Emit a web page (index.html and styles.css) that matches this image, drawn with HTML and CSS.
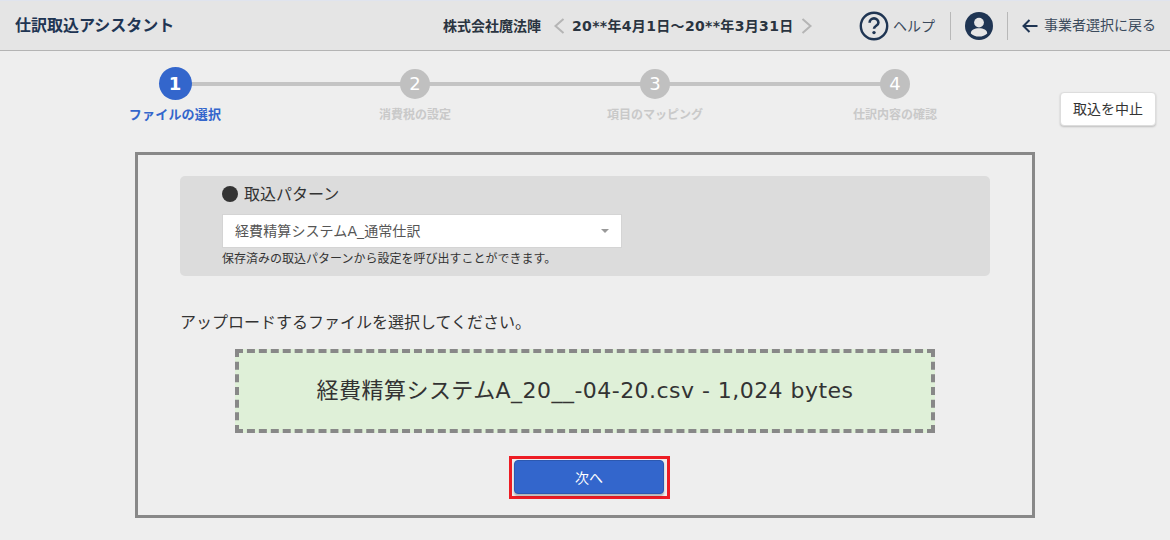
FILE: index.html
```html
<!DOCTYPE html>
<html lang="ja">
<head>
<meta charset="utf-8">
<title>仕訳取込アシスタント</title>
<link rel="stylesheet" href="styles.css">
</head>
<body>
<header class="header">
  <div class="title">仕訳取込アシスタント</div>
  <div class="period">
    <span class="company">株式会社魔法陣</span>
    <svg class="chev" width="12" height="18" viewBox="0 0 12 18"><path d="M10.500 2 2.500 9l8 7" fill="none" stroke="#b5b5b5" stroke-width="2"/></svg>
    <span class="dates">20**年4月1日～20**年3月31日</span>
    <svg class="chev" width="12" height="18" viewBox="0 0 12 18"><path d="M1.500 2l8 7-8 7" fill="none" stroke="#b5b5b5" stroke-width="2"/></svg>
  </div>
  <div class="tools">
    <div class="help">
      <svg width="30" height="30" viewBox="0 0 30 30"><circle cx="15" cy="15" r="13.2" fill="none" stroke="#1f3553" stroke-width="2.4"/><path d="M10.6 11.8a4.4 4.4 0 0 1 8.8 0c0 3-4.4 3-4.4 6" fill="none" stroke="#1f3553" stroke-width="2.6"/><circle cx="15" cy="21.6" r="1.7" fill="#1f3553"/></svg>
      <span>ヘルプ</span>
    </div>
    <div class="divider"></div>
    <svg class="avatar" width="28" height="28" viewBox="0 0 28 28"><circle cx="14" cy="14" r="14" fill="#1f3553"/><circle cx="14" cy="10.6" r="4.9" fill="#e6e6e6"/><path d="M5.8 21.4c0-3.6 3.8-5.2 8.2-5.2s8.2 1.6 8.2 5.2c-1.9 2-4.9 3.2-8.2 3.2s-6.3-1.2-8.2-3.2z" fill="#e6e6e6"/></svg>
    <div class="divider"></div>
    <div class="back">
      <svg width="16" height="14" viewBox="0 0 16 14"><path d="M7.5 1 1.500 7l6 6M2 7h13.500" fill="none" stroke="#1f3553" stroke-width="2"/></svg>
      <span>事業者選択に戻る</span>
    </div>
  </div>
</header>

<div class="steprow">
  <ol class="steps">
    <li class="step active"><span class="dot">1</span><span class="label">ファイルの選択</span></li>
    <li class="step"><span class="dot">2</span><span class="label">消費税の設定</span></li>
    <li class="step"><span class="dot">3</span><span class="label">項目のマッピング</span></li>
    <li class="step"><span class="dot">4</span><span class="label">仕訳内容の確認</span></li>
  </ol>
  <button class="cancel">取込を中止</button>
</div>

<main class="card">
  <section class="pattern">
    <div class="pattern-head"><span class="bullet"></span><span class="head-text">取込パターン</span></div>
    <div class="select"><span class="select-text">経費精算システムA_通常仕訳</span><span class="caret"></span></div>
    <div class="hint">保存済みの取込パターンから設定を呼び出すことができます。</div>
  </section>
  <p class="lead">アップロードするファイルを選択してください。</p>
  <div class="drop">経費精算システムA_20__-04-20.csv - 1,024 bytes</div>
  <div class="actions"><div class="highlight"><button class="next">次へ</button></div></div>
</main>
</body>
</html>
```

FILE: styles.css
```css
* { box-sizing: border-box; }
html, body { margin: 0; height: 100%; }
body {
  width: 1170px;
  height: 540px;
  overflow: hidden;
  background: #eeeeee;
  color: #333;
  font-family: "DejaVu Sans", "Noto Sans CJK JP", sans-serif;
}
.header {
  height: 51px;
  display: flex;
  align-items: center;
  background: #e5e5e5;
  border-top: 1px solid #e0e4ee;
  border-bottom: 1px solid #b4b4b4;
  padding: 0 14px 0 15px;
  color: #1f3553;
}
.title { font-size: 16px; font-weight: 700; width: 428px; padding-bottom: 3px; }
.period {
  display: flex;
  align-items: center;
  font-size: 14px;
  font-weight: 700;
  color: #2a3440;
  width: 408px;
}
.company { margin-right: 12px; padding-bottom: 2px; }
.dates { margin: 0 7px; padding-bottom: 2px; letter-spacing: .33px; white-space: nowrap; }
.tools { display: flex; align-items: center; flex: 1; justify-content: flex-end; }
.help { display: flex; align-items: center; gap: 4px; margin-right: 1px; font-size: 14px; }
.help span { font-weight: 400; color: #3b4a5c; padding-bottom: 2px; }
.divider { width: 1px; height: 28px; background: #b8b8b8; margin: 0 14px; }
.avatar { flex: none; }
.back { display: flex; align-items: center; gap: 6px; font-size: 14px; color: #3b4a5c; white-space: nowrap; }
.back span { padding-bottom: 3px; }

.steprow {
  height: 101px;
  display: flex;
  align-items: flex-start;
  padding-left: 55px;
}
.steps {
  list-style: none;
  margin: 16px 0 0;
  padding: 0;
  display: grid;
  grid-template-columns: repeat(4, 240px);
  width: 960px;
}
.step {
  position: relative;
  display: flex;
  flex-direction: column;
  align-items: center;
}
.step:not(:last-child)::after {
  content: "";
  position: absolute;
  left: 50%;
  width: 100%;
  top: 15px;
  height: 4px;
  background: #c4c4c4;
}
.dot {
  position: relative;
  z-index: 1;
  width: 30px;
  height: 30px;
  margin: 2px 0 1px;
  border-radius: 50%;
  background: #c0c0c0;
  color: #fff;
  font-size: 18px;
  line-height: 30px;
  text-align: center;
}
.label {
  margin-top: 6px;
  font-size: 12px;
  line-height: 18px;
  font-weight: 700;
  color: #c9c9c9;
  white-space: nowrap;
}
.active .dot {
  width: 33px;
  height: 33px;
  margin: 0;
  background: #3366cc;
  font-weight: 700;
  line-height: 33px;
}
.active .label { color: #3366cc; font-size: 13px; letter-spacing: .2px; }
.cancel {
  margin: 41px 0 0 45px;
  width: 96px;
  height: 34px;
  padding: 0 0 2px;
  background: #fff;
  border: 1px solid #ddd;
  border-radius: 4px;
  box-shadow: 0 1px 2px rgba(0,0,0,.2);
  color: #333;
  font: 14px "DejaVu Sans", "Noto Sans CJK JP", sans-serif;
}

.card {
  width: 900px;
  height: 366px;
  margin-left: 135px;
  border: 3px solid #888;
  padding: 21px 42px 0;
}
.pattern {
  width: 810px;
  height: 100px;
  background: #dcdcdc;
  border-radius: 5px;
  padding: 6px 42px 0;
}
.pattern-head {
  display: flex;
  align-items: center;
  gap: 6px;
  font-size: 16px;
  line-height: 24px;
  color: #333;
}
.head-text { position: relative; top: 1px; }
.bullet { width: 16px; height: 16px; border-radius: 50%; background: #333; }
.select {
  margin-top: 8px;
  width: 400px;
  height: 34px;
  background: #fff;
  border: 1px solid #d4d4d4;
  display: flex;
  align-items: center;
  justify-content: space-between;
  padding: 0 12px;
  font-size: 14px;
  color: #555;
}
.select-text { padding-bottom: 2px; letter-spacing: .1px; }
.caret {
  width: 0;
  height: 0;
  border-left: 4px solid transparent;
  border-right: 4px solid transparent;
  border-top: 4px solid #999;
}
.hint { font-size: 12px; line-height: 18px; margin-top: 2px; color: #333; }
.lead { margin: 34px 0 0; padding-top: 1px; font-size: 16px; line-height: 24px; color: #333; }
.drop {
  margin: 14px 0 0 55px;
  width: 700px;
  height: 84px;
  border: 4px dashed #888;
  background: #dff0d8;
  display: flex;
  align-items: center;
  justify-content: center;
  padding-bottom: 6px;
  font-size: 22px;
  letter-spacing: .46px;
  color: #333;
}
.actions { display: flex; justify-content: center; margin-top: 23px; padding-left: 8px; }
.highlight { border: 3px solid #ed1c24; padding: 1px 2px; width: 161px; height: 43px; }
.next {
  display: block;
  width: 150px;
  height: 34px;
  margin: 0 auto;
  padding: 0 0 1px;
  background: #3366cc;
  border: 1px solid #2c58b0;
  border-radius: 4px;
  box-shadow: 0 2px 2px rgba(0,0,0,.25);
  color: #fff;
  font: 14px "DejaVu Sans", "Noto Sans CJK JP", sans-serif;
}
```
